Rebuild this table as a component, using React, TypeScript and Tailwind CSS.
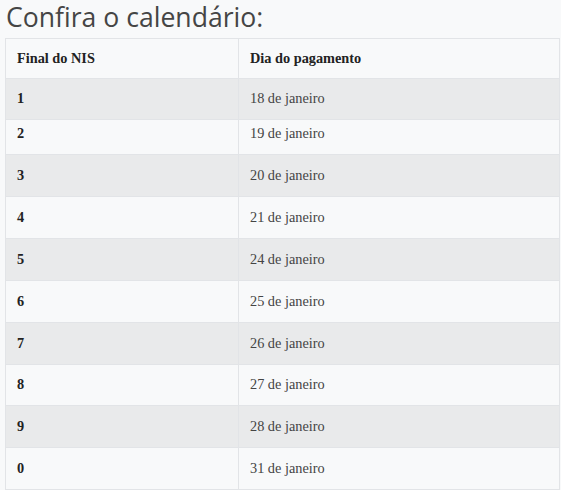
const rows: { nis: string; dia: string; h: string }[] = [
  { nis: '1', dia: '18 de janeiro', h: 'h-[41px]' },
  { nis: '2', dia: '19 de janeiro', h: 'h-[35px] [&>td]:pb-[6px]' },
  { nis: '3', dia: '20 de janeiro', h: 'h-[42px]' },
  { nis: '4', dia: '21 de janeiro', h: 'h-[42px]' },
  { nis: '5', dia: '24 de janeiro', h: 'h-[42px]' },
  { nis: '6', dia: '25 de janeiro', h: 'h-[42px]' },
  { nis: '7', dia: '26 de janeiro', h: 'h-[42px]' },
  { nis: '8', dia: '27 de janeiro', h: 'h-[41px]' },
  { nis: '9', dia: '28 de janeiro', h: 'h-[42px]' },
  { nis: '0', dia: '31 de janeiro', h: 'h-[42px]' },
];

export default function App() {
  return (
    <div className="w-[561px] h-[490px] overflow-hidden bg-[#f8f9fa]">
      <h2 className="h-[38px] pl-[6px] text-[26.6px] leading-[34px] text-[#454545] font-['Open_Sans',sans-serif] font-normal">
        Confira o calendário:
      </h2>
      <table className="ml-[5px] w-[555px] border-collapse font-['Liberation_Serif',serif] text-[14.3px] text-[#444]">
        <thead>
          <tr className="h-[40px] bg-[#f8f9fa]">
            <th className="w-[233px] border border-[#e2e4e7] pl-[11px] text-left font-bold text-[#222]">Final do NIS</th>
            <th className="border border-[#e2e4e7] pl-[11px] text-left font-bold text-[#222]">Dia do pagamento</th>
          </tr>
        </thead>
        <tbody>
          {rows.map((r, i) => (
            <tr key={r.nis} className={`${r.h} ${i % 2 === 0 ? 'bg-[#e9eaeb]' : 'bg-[#f8f9fa]'}`}>
              <td className="border border-[#e2e4e7] pl-[11px] font-bold text-[#222]">{r.nis}</td>
              <td className="border border-[#e2e4e7] pl-[11px]">{r.dia}</td>
            </tr>
          ))}
        </tbody>
      </table>
    </div>
  );
}
